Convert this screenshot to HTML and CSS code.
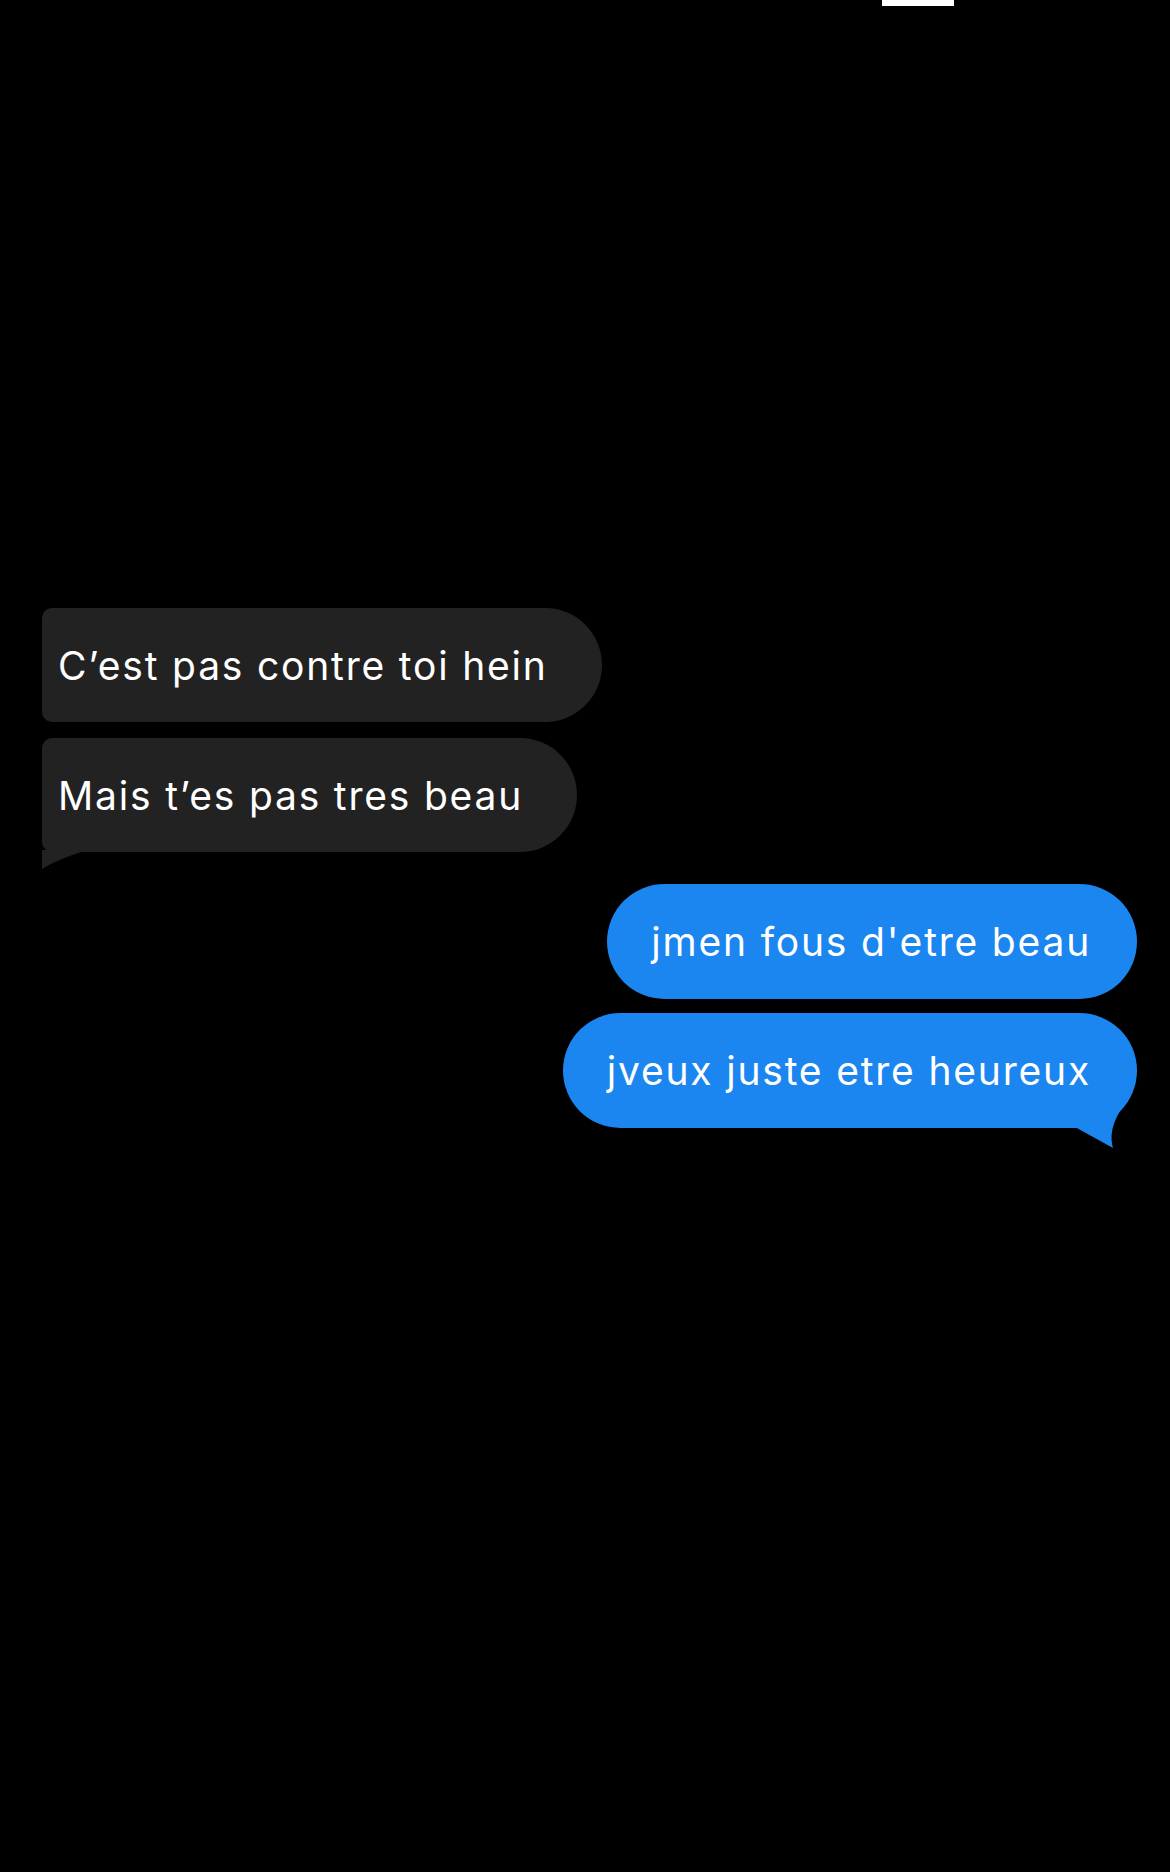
FILE: index.html
```html
<!DOCTYPE html>
<html lang="fr">
<head>
    <meta charset="UTF-8">
    <meta name="viewport" content="width=device-width, initial-scale=1.0">
    <title>Messages</title>
    <link rel="stylesheet" href="styles.css">
</head>
<body>

<div class="top-bar">
    <div class="top-line"></div>
</div>

<div class="thread">
    <!-- received messages -->
    <div class="group received">
        <div class="bubble">C’est pas contre toi hein</div>
        <div class="bubble last">Mais t’es pas tres beau</div>
    </div>

    <!-- sent messages -->
    <div class="group sent">
        <div class="bubble">jmen fous d'etre beau</div>
        <div class="bubble last">jveux juste etre heureux</div>
    </div>
</div>

</body>
</html>
```

FILE: styles.css
```css
html, body {
    margin: 0;
    padding: 0;
    width: 1170px;
    min-height: 1872px;
    background-color: #000;
    font-family: Inter, "Liberation Sans", Arial, sans-serif;
    color: #fff;
}

.top-bar {
    display: flex;
    padding-left: 882px;
}

.top-line {
    width: 72px;
    height: 6px;
    background-color: #fff;
}

.thread {
    display: flex;
    flex-direction: column;
    padding-top: 602px;
    gap: 32px;
}

.group {
    display: flex;
    flex-direction: column;
    gap: 16px;
}

.bubble {
    position: relative;
    display: flex;
    align-items: center;
    height: 114px;
    box-sizing: border-box;
    font-size: 39px;
    letter-spacing: 1.8px;
    white-space: nowrap;
}

.received {
    align-items: flex-start;
    padding-left: 42px;
}

.received .bubble {
    background-color: #222222;
    padding: 0 54px 0 16px;
    border-radius: 10px 57px 57px 10px;
}

.received .last::after {
    content: "";
    position: absolute;
    left: 0;
    bottom: -18px;
    width: 46px;
    height: 20px;
    background-color: #222222;
    clip-path: path("M0 0 L0 19 Q18 8 46 0 Z");
}

.sent {
    align-items: flex-end;
    padding-right: 33px;
    gap: 14px;
}

.sent .bubble {
    background-color: #1b85f0;
    height: 115px;
    padding: 0 46px 0 44px;
    border-radius: 58px;
}

.sent .last::after {
    content: "";
    position: absolute;
    right: 7px;
    bottom: -21px;
    width: 55px;
    height: 48px;
    background-color: #1b85f0;
    clip-path: path("M0 26 L38 47 Q33 30 45 10 L53 0 L0 0 Z");
}
```
